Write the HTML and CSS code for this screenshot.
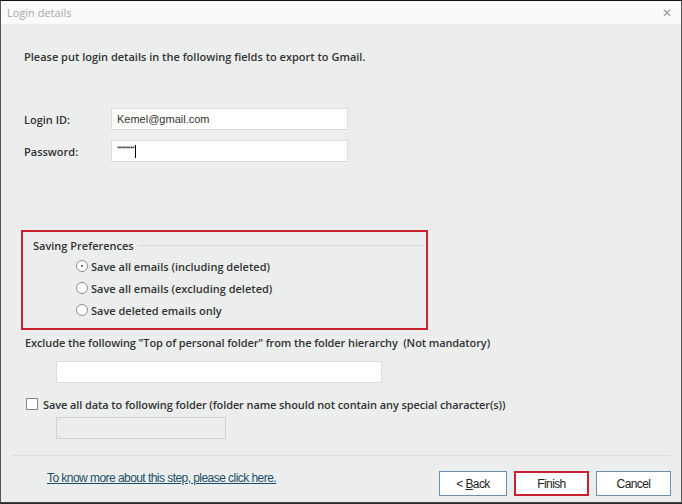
FILE: index.html
```html
<!DOCTYPE html>
<html>
<head>
<meta charset="utf-8">
<link rel="stylesheet" href="styles.css">
</head>
<body>
<div class="window">
  <div class="titlebar">
    <span class="title">Login details</span>
    <span class="close">&#x2715;</span>
  </div>
  <div class="content">
    <p class="intro">Please put login details in the following fields to export to Gmail.</p>
    <div class="field-row row-login">
      <span class="label">Login ID:</span>
      <div class="input">Kemel@gmail.com</div>
    </div>
    <div class="field-row row-pass">
      <span class="label">Password:</span>
      <div class="input pass"><span class="dots">********</span><span class="caret"></span></div>
    </div>
    <div class="highlight">
      <div class="group">
        <div class="legend-row"><span class="legend">Saving Preferences</span><span class="legend-line"></span></div>
        <div class="radio"><span class="dot checked"></span><span>Save all emails (including deleted)</span></div>
        <div class="radio"><span class="dot"></span><span>Save all emails (excluding deleted)</span></div>
        <div class="radio"><span class="dot"></span><span>Save deleted emails only</span></div>
      </div>
    </div>
    <p class="exclude">Exclude the following "Top of personal folder" from the folder hierarchy&nbsp; (Not mandatory)</p>
    <div class="input wide"></div>
    <div class="check-row"><span class="box"></span><span>Save all data to following folder (folder name should not contain any special character(s))</span></div>
    <div class="input disabled"></div>
  </div>
  <div class="separator"></div>
  <div class="footer">
    <a class="link" href="#">To know more about this step, please click here.</a>
    <div class="buttons">
      <span class="btn back">&lt;&nbsp;<u>B</u>ack</span>
      <span class="btn finish">Finish</span>
      <span class="btn cancel">Cancel</span>
    </div>
  </div>
</div>
</body>
</html>
```
FILE: styles.css
```css
* { box-sizing: border-box; }
html, body { margin: 0; padding: 0; }
body {
  width: 682px;
  height: 504px;
  background: #2a2a2a;
  font-family: "Open Sans", "DejaVu Sans", sans-serif;
  overflow: hidden;
}
.window {
  width: 682px;
  height: 503px;
  border-top: 1px solid #111;
  border-left: 1px solid #555;
  border-right: 1px solid #555;
  border-bottom: 1px solid #444;
  background: #eceeed;
  display: flex;
  flex-direction: column;
}
.titlebar {
  height: 23px;
  background: #fafafa;
  display: flex;
  align-items: center;
  justify-content: space-between;
  padding: 0 9px 0 6px;
  color: #a8a8a8;
  font-size: 11px;
}
.close { font-size: 12px; color: #999; }
.content {
  padding: 0 0 0 23px;
  font-size: 11px;
  font-weight: 600;
  color: #333;
}
.intro { margin: 25px 0 0 0; line-height: 16px; }
.field-row { display: flex; align-items: center; }
.row-login { margin-top: 43px; }
.row-pass { margin-top: 10px; }
.label { width: 87px; }
.input {
  width: 237px;
  height: 22px;
  background: #fff;
  border: 1px solid #dcdcdc;
  font-weight: 400;
  font-size: 11px;
  color: #333;
  padding: 0 0 0 5px;
  line-height: 20px;
  font-family: "Liberation Sans", Arial, sans-serif;
}
.pass { display: flex; align-items: center; }
.dots { font-size: 8px; letter-spacing: -1px; line-height: 8px; position: relative; top: -2px; }
.caret { width: 1px; height: 13px; background: #000; margin-left: 1px; }
.highlight {
  margin: 68px 0 0 -3px;
  width: 407px;
  height: 100px;
  border: 2px solid #c8212f;
  padding: 6px 2px 0 10px;
}
.legend-row { display: flex; align-items: center; height: 14px; }
.legend { padding-right: 4px; }
.legend-line { flex: 1; height: 1px; background: #d6d8d7; margin-top: 1px; }
.radio {
  display: flex;
  align-items: center;
  margin-left: 43px;
  height: 16px;
  margin-top: 6px;
}
.radio:first-of-type { margin-top: 7px; }
.dot {
  width: 12px;
  height: 12px;
  border: 1px solid #8d8d8d;
  border-radius: 50%;
  background: #fff;
  margin-right: 3px;
  position: relative;
}
.dot.checked::after {
  content: "";
  position: absolute;
  left: 4px; top: 4px;
  width: 2px; height: 2px;
  border-radius: 50%;
  background: #444;
}
.exclude { margin: 5px 0 0 1px; line-height: 16px; letter-spacing: -0.1px; }
.wide { margin: 10px 0 0 32px; width: 326px; }
.check-row { display: flex; align-items: center; margin-top: 14px; height: 14px; letter-spacing: -0.1px; }
.box { width: 12px; height: 12px; border: 1px solid #888; background: #fff; margin: 0 5px 0 2px; }
.disabled { margin: 6px 0 0 32px; width: 170px; background: #ececec; border-color: #d2d2d2; }
.separator { margin: 16px 11px 0 11px; height: 1px; background: #fdfdfd; border-top: 1px solid #dcdedd; }
.footer {
  display: flex;
  align-items: center;
  justify-content: space-between;
  padding: 0 10px 0 46px;
  margin-top: 15px;
  font-family: "Liberation Sans", Arial, sans-serif;
  font-size: 12px;
}
.link { color: #1c4e6b; text-decoration: underline; letter-spacing: -0.55px; margin-top: -12px; }
.buttons { display: flex; gap: 7px; }
.btn {
  width: 75px;
  height: 25px;
  border: 1px solid #6f8fb0;
  background: #fff;
  display: flex;
  align-items: center;
  justify-content: center;
  color: #222;
  letter-spacing: -0.6px;
}
.btn.back { width: 68px; }
.btn.finish { border: 2px solid #c8212f; }
```
